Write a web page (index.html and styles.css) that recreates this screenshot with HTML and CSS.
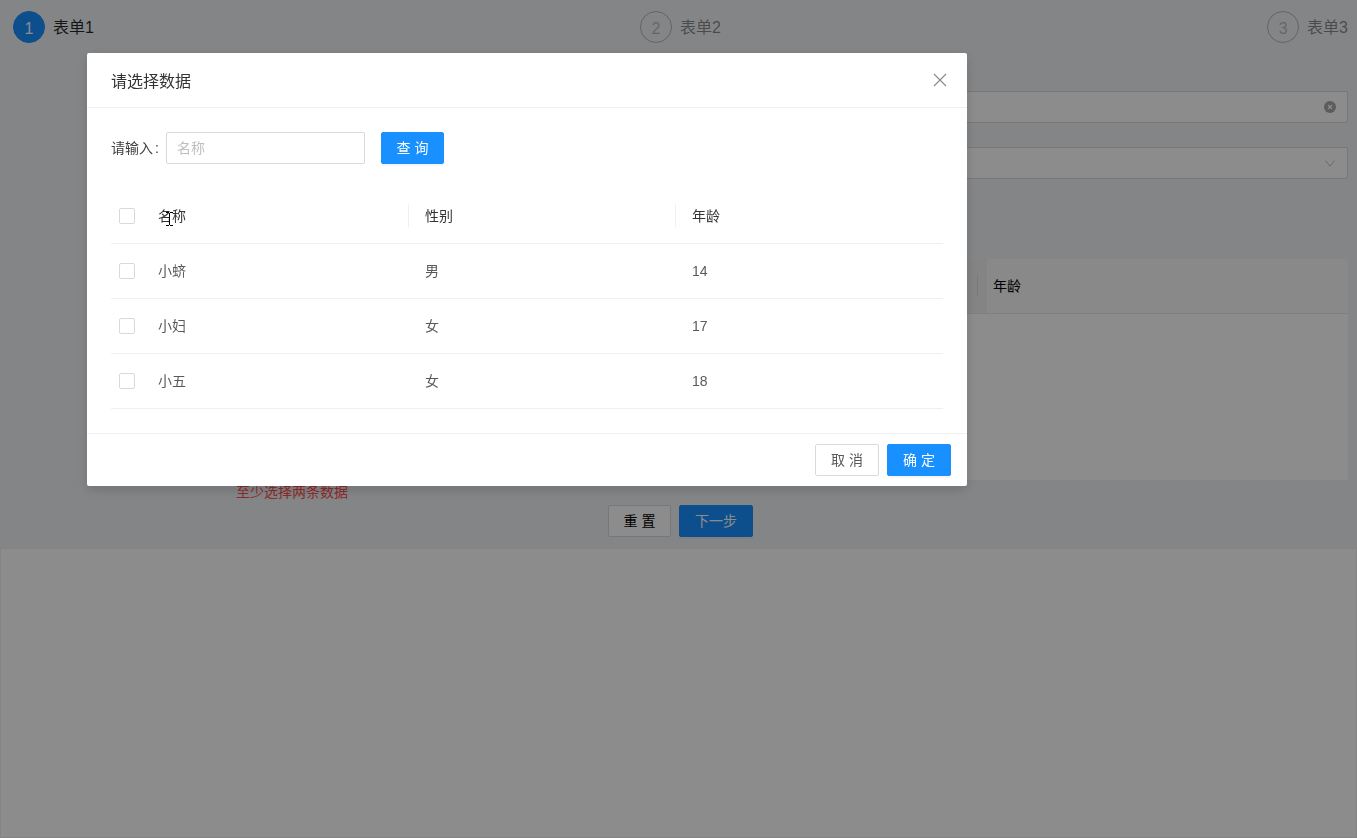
FILE: index.html
```html
<!DOCTYPE html>
<html lang="zh-CN">
<head>
<meta charset="utf-8">
<title>表单</title>
<link rel="stylesheet" href="styles.css">
</head>
<body>
<div class="page">
  <div class="steps">
    <div class="step step-active"><span class="step-icon">1</span><span class="step-title">表单1</span></div>
    <div class="step"><span class="step-icon">2</span><span class="step-title">表单2</span></div>
    <div class="step"><span class="step-icon">3</span><span class="step-title">表单3</span></div>
  </div>
  <form class="form">
    <div class="field field-first">
      <svg class="clear-icon" viewBox="0 0 12 12" width="12" height="12"><circle cx="6" cy="6" r="6" fill="#a8a8a8"/><path d="M4 4l4 4M8 4l-4 4" stroke="#fff" stroke-width="1.1"/></svg>
    </div>
    <div class="field field-second">
      <svg class="chevron-icon" viewBox="0 0 10 7" width="10" height="7"><path d="M.4.6L5 6.2 9.6.6" fill="none" stroke="#bfbfbf" stroke-width="1"/></svg>
    </div>
    <div class="bg-table">
      <div class="bg-head">
        <div class="bg-hover"><span class="bg-divider"></span></div>
        <div class="bg-age">年龄</div>
      </div>
    </div>
    <div class="error-msg">至少选择两条数据</div>
    <div class="form-actions">
      <button type="button" class="btn btn-ghost btn-reset">重 置</button>
      <button type="button" class="btn btn-primary btn-next">下一步</button>
    </div>
  </form>
  <div class="lower-panel"></div>
</div>

<div class="mask"></div>
<div class="modal">
  <div class="modal-header">
    <span class="modal-title">请选择数据</span>
    <svg class="modal-close" viewBox="0 0 14 14" width="14" height="14"><path d="M1 1l12 12M13 1L1 13" fill="none" stroke="#8c8c8c" stroke-width="1.2"/></svg>
  </div>
  <div class="modal-body">
    <div class="search">
      <label class="search-label">请输入<span class="search-colon">:</span></label>
      <div class="search-input">名称</div>
      <button type="button" class="btn btn-primary btn-query">查 询</button>
    </div>
    <div class="table">
      <div class="row row-head">
        <div class="cell cell-check"><span class="checkbox"></span></div>
        <div class="cell cell-zh">名称</div>
        <div class="cell cell-zh cell-div">性别</div>
        <div class="cell cell-zh cell-div">年龄</div>
      </div>
      <div class="row">
        <div class="cell cell-check"><span class="checkbox"></span></div>
        <div class="cell cell-zh">小蛴</div>
        <div class="cell cell-zh">男</div>
        <div class="cell">14</div>
      </div>
      <div class="row">
        <div class="cell cell-check"><span class="checkbox"></span></div>
        <div class="cell cell-zh">小妇</div>
        <div class="cell cell-zh">女</div>
        <div class="cell">17</div>
      </div>
      <div class="row">
        <div class="cell cell-check"><span class="checkbox"></span></div>
        <div class="cell cell-zh">小五</div>
        <div class="cell cell-zh">女</div>
        <div class="cell">18</div>
      </div>
    </div>
  </div>
  <div class="modal-footer">
    <button type="button" class="btn btn-ghost">取 消</button>
    <button type="button" class="btn btn-primary">确 定</button>
  </div>
</div>
<svg class="cursor" viewBox="0 0 7 14" width="7" height="14" shape-rendering="crispEdges"><path d="M0 .5h3M4 .5h3M3.5 1v12M0 13.5h3M4 13.5h3" fill="none" stroke="#000" stroke-width="1"/></svg>
</body>
</html>
```

FILE: styles.css
```css
* { box-sizing: border-box; }
html, body { margin: 0; height: 100%; }
body {
  font-family: "Liberation Sans", "Noto Sans CJK SC", sans-serif;
  font-size: 14px;
  color: #595959;
  background: #f0f2f5;
  overflow: hidden;
}
.page { height: 838px; display: flex; flex-direction: column; }

.steps { display: flex; justify-content: space-between; padding: 11px 9px 0 13px; height: 54px; }
.step { display: flex; align-items: flex-start; height: 32px; }
.step-icon {
  width: 32px; height: 32px; border-radius: 50%;
  border: 1px solid rgba(0,0,0,.25);
  color: rgba(0,0,0,.25);
  font-size: 16px; line-height: 33px; text-align: center;
  margin-right: 8px;
}
.step-title { font-size: 16px; line-height: 34px; color: rgba(0,0,0,.45); }
.step-active .step-icon { background: #1890ff; border-color: #1890ff; color: #fff; }
.step-active .step-title { color: rgba(0,0,0,.85); }

.form { padding: 0 9px 0 236px; flex: none; }
.field {
  height: 32px; background: #fff; border: 1px solid #d9d9d9; border-radius: 2px;
  display: flex; align-items: center; justify-content: flex-end; padding-right: 11px;
}
.field-first { margin-top: 37px; }
.field-second { margin-top: 24px; }
.chevron-icon { margin-right: 1px; }
.bg-table { margin-top: 80px; height: 221px; background: #fff; }
.bg-head { display: flex; height: 55px; background: #fafafa; border-bottom: 1px solid #e8e8e8; justify-content: flex-end; }
.bg-hover { width: 751px; flex: none; background: #f0f0f0; position: relative; }
.bg-divider { position: absolute; right: 9px; top: 16px; width: 1px; height: 22px; background: #dcdcdc; }
.bg-age { width: 361px; flex: none; padding-left: 6px; line-height: 54px; color: #000; }
.error-msg { color: #ff4d4f; line-height: 22px; height: 25px; padding-top: 1px; }
.form-actions { display: flex; justify-content: center; gap: 8px; margin-left: -223px; }
.lower-panel { margin-top: 11px; flex: 1; background: #fff; border: 1px solid #f0f0f0; }

.btn {
  height: 32px; padding: 0 0 2px; font: inherit; font-size: 14px;
  border-radius: 2px; border: 1px solid #d9d9d9;
  cursor: pointer;
}
.btn-ghost { background: #fff; color: #595959; width: 64px; }
.btn-primary { background: #1890ff; border-color: #1890ff; color: #fff; width: 64px; box-shadow: 0 2px 0 rgba(0,0,0,.035); }
.form-actions .btn-reset { width: 63px; color: #000; }
.form-actions .btn-next { width: 74px; }

.mask { position: fixed; inset: 0; background: rgba(0,0,0,.45); }
.modal {
  position: fixed; left: 87px; top: 53px; width: 880px; height: 433px;
  background: #fff; border-radius: 2px;
  box-shadow: 0 4px 12px rgba(0,0,0,.15);
  display: flex; flex-direction: column;
}
.modal-header {
  height: 55px; padding: 0 20px 0 24px;
  display: flex; align-items: center; justify-content: space-between;
  border-bottom: 1px solid #f0f0f0;
}
.modal-title { font-size: 16px; color: #333; }
.modal-body { padding: 24px; flex: 1; }
.search { display: flex; align-items: center; height: 32px; }
.search-label { width: 55px; flex: none; color: #404040; white-space: nowrap; padding-bottom: 2px; }
.search-colon { margin-left: 2px; }
.search-input {
  width: 199px; height: 32px; border: 1px solid #d9d9d9; border-radius: 2px;
  padding: 0 10px; line-height: 30px; color: #bfbfbf;
}
.search .btn-query { margin-left: 16px; width: 63px; }
.table { margin-top: 25px; }
.row {
  display: grid; grid-template-columns: 31px 267px 267px 267px;
  height: 55px; border-bottom: 1px solid #f0f0f0; align-items: center;
}
.row-head { color: #333; }
.cell { padding-left: 16px; height: 100%; display: flex; align-items: center; position: relative; }
.cell-zh { padding-bottom: 2px; }
.cell-check { padding-left: 8px; }
.cell-div::before {
  content: ""; position: absolute; left: -1px; top: 15px; width: 1px; height: 23px; background: #f0f0f0;
}
.checkbox { width: 16px; height: 16px; flex: none; border: 1px solid #d9d9d9; border-radius: 2px; background: #fff; }
.modal-footer {
  height: 53px; border-top: 1px solid #f0f0f0; padding: 10px 16px;
  display: flex; justify-content: flex-end; gap: 8px;
}
.cursor { position: fixed; left: 166px; top: 212px; }
```
